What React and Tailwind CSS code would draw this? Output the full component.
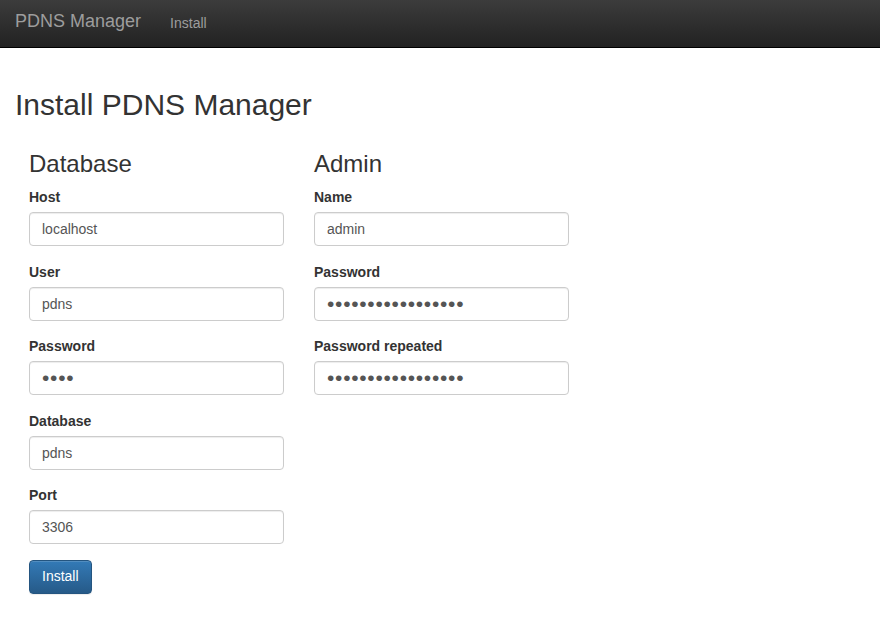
import React from "react";

const font = { fontFamily: '"Liberation Sans", Arial, sans-serif' };

function Field({ label, value, type = "text" }) {
  const pw = type === "password";
  return (
    <div className="mb-[15.5px]">
      <label className="block text-[14px] leading-5 font-bold text-[#333] mb-[5px]">{label}</label>
      <input
        type={type}
        defaultValue={value}
        className={
          "block w-full h-[34px] px-3 py-[6px] text-[#555] bg-white border border-[#ccc] rounded-[4px] shadow-[inset_0_1px_1px_rgba(0,0,0,0.075)] outline-none " +
          (pw ? "text-[21px] tracking-[0.72px]" : "text-[14px]")
        }
      />
    </div>
  );
}

export default function App() {
  return (
    <div className="min-h-[621px] bg-white text-[#333]" style={font}>
      {/* Navbar */}
      <nav className="h-[48px] bg-gradient-to-b from-[#3c3c3c] to-[#222] border-b border-black flex items-start px-[15px]">
        <a className="text-[18px] leading-5 text-[#9d9d9d] pt-[11px] pr-[14px]">PDNS Manager</a>
        <a className="text-[14px] leading-5 text-[#9d9d9d] pt-[13px] px-[15px]">Install</a>
      </nav>

      <div className="px-[14px]">
        <h1 className="text-[30px] leading-[33px] mt-[40px] mb-[10px] pl-px text-[#333]">Install PDNS Manager</h1>

        <div className="flex">
          {/* Database column */}
          <div className="w-[285px] px-[15px]">
            <h3 className="text-[24px] leading-[26.4px] mt-[20px] mb-[10px]">Database</h3>
            <Field label="Host" value="localhost" />
            <Field label="User" value="pdns" />
            <Field label="Password" value="pdns" type="password" />
            <Field label="Database" value="pdns" />
            <Field label="Port" value="3306" />
            <button className="h-[34px] px-3 text-[14px] text-white rounded-[4px] border border-[#245580] bg-gradient-to-b from-[#337ab7] to-[#265a88] shadow-[inset_0_1px_0_rgba(255,255,255,0.15),0_1px_1px_rgba(0,0,0,0.075)]">
              Install
            </button>
          </div>

          {/* Admin column */}
          <div className="w-[285px] px-[15px]">
            <h3 className="text-[24px] leading-[26.4px] mt-[20px] mb-[10px]">Admin</h3>
            <Field label="Name" value="admin" />
            <Field label="Password" value="adminpassword1234" type="password" />
            <Field label="Password repeated" value="adminpassword1234" type="password" />
          </div>
        </div>
      </div>
    </div>
  );
}
